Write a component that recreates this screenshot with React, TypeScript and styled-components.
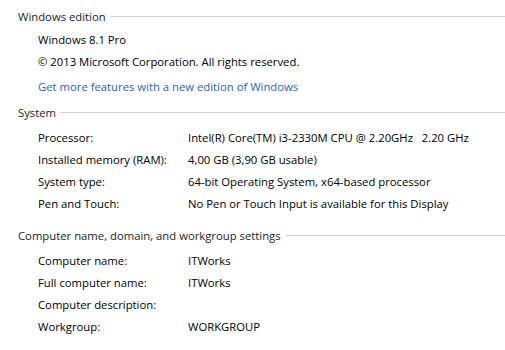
import styled, { createGlobalStyle } from "styled-components";

const GlobalStyle = createGlobalStyle`
  body {
    margin: 0;
    background: #ffffff;
    font-family: "Open Sans", "Noto Sans", sans-serif;
    font-size: 11.3px;
    color: #000000;
  }
`;

type Row = { label: string; value: string };

const systemRows: Row[] = [
  { label: "Processor:", value: "Intel(R) Core(TM) i3-2330M CPU @ 2.20GHz\u00a0\u00a0\u00a02.20 GHz" },
  { label: "Installed memory (RAM):", value: "4,00 GB (3,90 GB usable)" },
  { label: "System type:", value: "64-bit Operating System, x64-based processor" },
  { label: "Pen and Touch:", value: "No Pen or Touch Input is available for this Display" },
];

const computerRows: Row[] = [
  { label: "Computer name:", value: "ITWorks" },
  { label: "Full computer name:", value: "ITWorks" },
  { label: "Computer description:", value: "" },
  { label: "Workgroup:", value: "WORKGROUP" },
];

export default function App() {
  return (
    <>
      <GlobalStyle />
      <Page>
        <Section $gap={6}>
          <Header>
            <HeaderText>Windows edition</HeaderText>
            <Rule />
          </Header>
          <Body $top={5}>
            <Line>Windows 8.1 Pro</Line>
            <Line>© 2013 Microsoft Corporation. All rights reserved.</Line>
            <Link href="#">Get more features with a new edition of Windows</Link>
          </Body>
        </Section>

        <Section $gap={12}>
          <Header>
            <HeaderText>System</HeaderText>
            <Rule />
          </Header>
          <Body $top={7}>
            {systemRows.map((r) => (
              <InfoRow key={r.label}>
                <Label>{r.label}</Label>
                <Value>{r.value}</Value>
              </InfoRow>
            ))}
          </Body>
        </Section>

        <Section $gap={0}>
          <Header>
            <HeaderText>Computer name, domain, and workgroup settings</HeaderText>
            <Rule />
          </Header>
          <Body $top={7}>
            {computerRows.map((r) => (
              <InfoRow key={r.label}>
                <Label>{r.label}</Label>
                <Value>{r.value}</Value>
              </InfoRow>
            ))}
          </Body>
        </Section>
      </Page>
    </>
  );
}

const Page = styled.div`
  width: 505px;
  height: 350px;
  padding: 8px 0 0 18px;
  box-sizing: border-box;
  overflow: hidden;
`;

const Section = styled.section<{ $gap: number }>`
  display: flex;
  flex-direction: column;
  margin-bottom: ${(p) => p.$gap}px;
`;

const Header = styled.div`
  display: flex;
  align-items: center;
  gap: 4px;
  height: 16px;
`;

const HeaderText = styled.span`
  color: #1e1e1e;
  white-space: nowrap;
`;

const Rule = styled.div`
  flex: 1;
  height: 1px;
  background: #d3d3d3;
  margin-top: 1px;
`;

const Body = styled.div<{ $top: number }>`
  display: flex;
  flex-direction: column;
  padding: ${(p) => p.$top}px 0 0 20px;
`;

const Line = styled.div`
  height: 22px;
  line-height: 22px;
  white-space: nowrap;
`;

const Link = styled.a`
  height: 22px;
  line-height: 22px;
  margin-top: 3px;
  color: #1e63c8;
  text-decoration: none;
  white-space: nowrap;
`;

const InfoRow = styled.div`
  display: grid;
  grid-template-columns: 150px 1fr;
  height: 22px;
  line-height: 22px;
  white-space: nowrap;
`;

const Label = styled.span``;

const Value = styled.span``;
